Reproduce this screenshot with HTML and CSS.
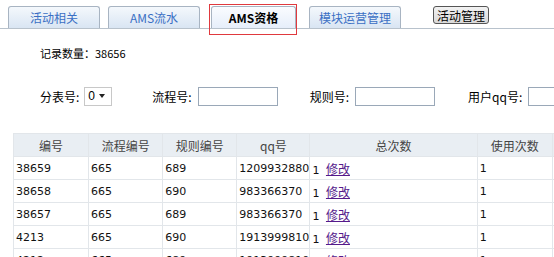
FILE: index.html
```html
<!DOCTYPE html>
<html>
<head>
<meta charset="utf-8">
<link rel="stylesheet" href="styles.css">
</head>
<body>
<div class="tabs">
  <div class="tab">活动相关</div>
  <div class="tab">AMS流水</div>
  <div class="tab tab-on">AMS资格</div>
  <div class="tab">模块运营管理</div>
  <button class="btn">活动管理</button>
</div>
<div class="count">记录数量：38656</div>
<div class="filters">
  <label class="f f1">分表号: <span class="sel">0 <span class="caret"></span></span></label>
  <label class="f f2">流程号: <span class="inp"></span></label>
  <label class="f f3">规则号: <span class="inp"></span></label>
  <label class="f f4">用户qq号: <span class="inp"></span></label>
</div>
<table class="grid">
  <colgroup>
    <col class="c1"><col class="c2"><col class="c3"><col class="c4"><col class="c5"><col class="c6"><col class="c7">
  </colgroup>
  <thead>
    <tr><th>编号</th><th>流程编号</th><th>规则编号</th><th>qq号</th><th>总次数</th><th>使用次数</th><th>状态</th></tr>
  </thead>
  <tbody>
    <tr><td>38659</td><td>665</td><td>689</td><td>1209932880</td><td>1 <a href="#">修改</a></td><td>1</td><td>2</td></tr>
    <tr><td>38658</td><td>665</td><td>690</td><td>983366370</td><td>1 <a href="#">修改</a></td><td>1</td><td>2</td></tr>
    <tr><td>38657</td><td>665</td><td>689</td><td>983366370</td><td>1 <a href="#">修改</a></td><td>1</td><td>2</td></tr>
    <tr><td>4213</td><td>665</td><td>690</td><td>1913999810</td><td>1 <a href="#">修改</a></td><td>1</td><td>2</td></tr>
    <tr><td>4212</td><td>665</td><td>689</td><td>1913999810</td><td>1 <a href="#">修改</a></td><td>1</td><td>2</td></tr>
  </tbody>
</table>
</body>
</html>
```
FILE: styles.css
```css
html, body { margin: 0; padding: 0; background: #fff; overflow: hidden; }
body { font-family: "Liberation Sans", "Noto Sans CJK SC", sans-serif; font-size: 12px; color: #000; width: 554px; height: 257px; }

.tabs { display: flex; align-items: flex-end; height: 28px; padding-left: 8px; border-bottom: 1px solid #b8c2cc; position: relative; }
.tab { width: 90px; height: 21px; margin-right: 8px; border: 1px solid #a8b4c2; border-bottom: none; border-radius: 3px 3px 0 0; background: linear-gradient(#f4f8fc, #d9e5f3); color: #3a6fc4; font-family: "Noto Sans CJK SC", sans-serif; font-size: 12px; line-height: 21px; text-align: center; }
.tab-on { width: 83px; margin-left: 3px; margin-right: 13px; background: linear-gradient(#fafcff, #e6eefa); color: #000; font-weight: bold; position: relative; }
.tab-on::after { content: ""; position: absolute; left: -3px; top: -3px; width: 86px; height: 29px; border: 1px solid #e0393e; }
.btn { margin-left: 24px; margin-bottom: 4px; height: 18px; padding: 0 3px; border: 1px solid #555; border-radius: 3px; background: linear-gradient(#f2f2f2, #d9d9d9); font-family: "Noto Sans CJK SC", sans-serif; font-size: 12px; line-height: 15px; color: #000; }

.count { margin: 17px 0 0 40px; height: 14px; line-height: 14px; font-size: 11px; font-family: "Noto Sans CJK SC", sans-serif; }

.filters { display: flex; align-items: center; margin-top: 26px; height: 20px; font-family: "Noto Sans CJK SC", sans-serif; font-size: 12px; }
.f { display: flex; align-items: center; white-space: nowrap; }
.f1 { margin-left: 40px; }
.f2 { margin-left: 40px; }
.f3 { margin-left: 32px; }
.f4 { margin-left: 33px; }
.sel { display: inline-flex; align-items: center; margin-left: 5px; width: 23px; height: 17px; padding-left: 3px; border: 1px solid #c8c8c8; font-family: "Liberation Sans", sans-serif; font-size: 12px; }
.caret { margin-left: 4px; width: 0; height: 0; border-left: 3px solid transparent; border-right: 3px solid transparent; border-top: 4px solid #222; }
.inp { display: inline-block; margin-left: 6px; width: 78px; height: 17px; border: 1px solid #9aa8b8; background: #fff; }

.grid { margin: 27px 0 0 13px; border-collapse: collapse; table-layout: fixed; width: 620px; }
.c1 { width: 75px; } .c2 { width: 74px; } .c3 { width: 74px; } .c4 { width: 73px; } .c5 { width: 167px; } .c6 { width: 75px; } .c7 { width: 80px; }
.grid tr { height: 23px; }
.grid th, .grid td { border: 1px solid #e2e6ea; padding: 0 2px; text-align: left; font-size: 12px; white-space: nowrap; overflow: hidden; }
.grid th { background: #e9eef3; color: #444; font-weight: normal; text-align: center; font-family: "Noto Sans CJK SC", sans-serif; }
.grid td { font-family: "DejaVu Sans", "Noto Sans CJK SC", sans-serif; font-size: 11px; color: #111; }
.grid a { color: #551a8b; text-decoration: underline; margin-left: 3px; font-family: "Noto Sans CJK SC", sans-serif; font-size: 12px; }
```
